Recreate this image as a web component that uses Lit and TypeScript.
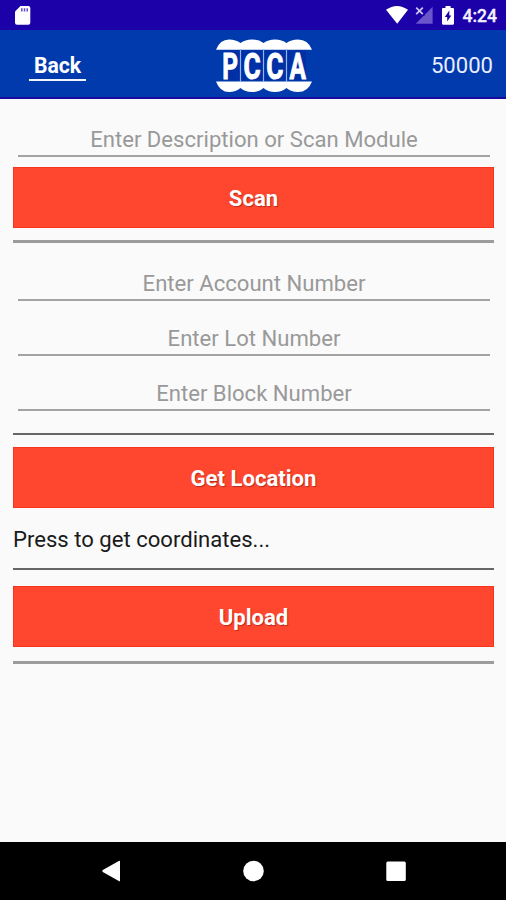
import { LitElement, html, css, svg } from "lit";
import { customElement, property } from "lit/decorators.js";

@customElement("status-bar")
class StatusBar extends LitElement {
  static styles = css`
    :host { display: block; height: 30px; background: #1c00a8; }
    svg { display: block; }
    text { font: 500 18.5px Roboto, sans-serif; fill: #f4f2ff; stroke: #f4f2ff; stroke-width: 0.35px; }
  `;
  render() {
    return html`<svg width="506" height="30" viewBox="0 0 506 30">
      <path fill="#fff" d="M20.5 6H28.3Q30.3 6 30.3 8V22.8Q30.3 24.8 28.3 24.8H17Q15 24.8 15 22.8V11.5Z" />
      <path stroke="#1c00a8" stroke-opacity=".7" stroke-width="1.5" d="M21.8 8.3V11.5M24.5 8.3V11.5M27.2 8.3V11.5" />
      <path fill="#fff" d="M386 9.8Q397 2.2 408 9.8L397.2 23.7Z" />
      <path fill="#6a55cb" d="M432.6 6.8V23.8H415.6Z" />
      <path fill="#1c00a8" d="M414 5H424.5V16H414Z" />
      <path stroke="#cfc8f2" stroke-width="1.7" d="M416.2 7.7L422.8 14.2M422.8 7.7L416.2 14.2" />
      <path fill="#fff" d="M445.5 6H450.6V8H453Q454 8 454 9V23.6Q454 24.7 453 24.7H443Q442 24.7 442 23.6V9Q442 8 443 8H445.5Z" />
      <path fill="#1c00a8" d="M449.3 10.5L444.8 17H447.2V21.5L451.3 15.4H449.3Z" />
      <text x="462.5" y="22.3" textLength="34.5" lengthAdjust="spacingAndGlyphs">4:24</text>
    </svg>`;
  }
}

@customElement("pcca-logo")
class PccaLogo extends LitElement {
  static styles = css`
    :host { display: block; }
    svg { display: block; }
    text { font: 700 37px Roboto, sans-serif; fill: #fff; stroke: #fff; stroke-width: 1px; }
  `;
  render() {
    const letters = [
      { c: "P", x: 7.2, s: 0.66 },
      { c: "C", x: 28.4, s: 0.71 },
      { c: "C", x: 51.2, s: 0.71 },
      { c: "A", x: 74.4, s: 0.66 },
    ];
    return html`<svg width="98" height="54" viewBox="0 0 98 54">
      <path fill="#001f9c" d="M7 12.5H91V42.5H7Z" opacity=".35" />
      <path fill="#fff" d="M1 11.7Q5 1.5 14 1.5Q21 1.5 25.5 5Q30 1.5 37 1.5Q44 1.5 48.5 5Q53 1.5 60 1.5Q67 1.5 71.5 5Q76 1.5 83 1.5Q93 1.5 97 11.7Z" />
      <path fill="#fff" d="M1 43.4H97Q93 54 83 54Q76 54 71.5 50Q67 54 60 54Q53 54 48.5 50Q44 54 37 54Q30 54 25.5 50Q21 54 14 54Q5 54 1 43.4Z" />
      <path stroke="#8fb4f0" stroke-width="1.2" d="M25.5 11V44M48.5 11V44M71.5 11V44" />
      ${letters.map(
        (l) => svg`<text transform="translate(${l.x} 40.7) scale(${l.s} 1)">${l.c}</text>`
      )}
    </svg>`;
  }
}

@customElement("entry-field")
class EntryField extends LitElement {
  @property() label = "";
  static styles = css`
    :host {
      display: block;
      box-sizing: border-box;
      margin: 0 4px 0 5px;
      height: 42px;
      border-bottom: 2px solid #a3a3a3;
      text-align: center;
      color: #999;
      font: 400 22.1px/26px Roboto, sans-serif;
      padding-top: 11px;
    }
  `;
  render() {
    return html`${this.label}`;
  }
}

@customElement("action-button")
class ActionButton extends LitElement {
  @property() label = "";
  static styles = css`
    :host {
      display: flex;
      box-sizing: border-box;
      height: 61px;
      align-items: center;
      justify-content: center;
      background: #ff4730;
      border: 1px solid #f8331e;
      color: #fff;
      font: 700 22.1px/26px Roboto, sans-serif;
      text-shadow: 1px 1px 1px #b92a18;
    }
  `;
  render() {
    return html`<span>${this.label}</span>`;
  }
}

@customElement("app-root")
class AppRoot extends LitElement {
  static styles = css`
    :host {
      display: flex;
      flex-direction: column;
      height: 900px;
      background: #fafafa;
      font-family: Roboto, sans-serif;
      overflow: hidden;
    }
    header {
      box-sizing: border-box;
      height: 69px;
      background: #003aad;
      border-bottom: 2px solid #1a0a9c;
      display: grid;
      grid-template-columns: 1fr 98px 1fr;
      color: #fff;
      font-size: 22.1px;
      line-height: 26px;
    }
    .back {
      justify-self: start;
      align-self: start;
      box-sizing: border-box;
      width: 57px;
      height: 28px;
      margin: 23px 0 0 29px;
      border-bottom: 2px solid #f2f5ff;
      text-align: center;
      font-size: 21.2px;
      font-weight: 700;
    }
    pcca-logo { margin: 8px 0 0 0; }
    .logo { padding-left: 11px; }
    .count { justify-self: end; margin: 22px 13px 0 0; color: #e9eeff; }
    main { flex: 1; padding: 16px 12px 0 13px; }
    .rule { height: 2px; background: #666; }
    .thick { height: 3px; background: #9c9c9c; }
    .gap-button { margin-top: 10px; }
    .gap-rule { margin-top: 12px; }
    .group { display: grid; gap: 13px; margin-top: 16px; }
    .rule-fields { margin-top: 22px; }
    .gap-location { margin-top: 12px; }
    .coords { font-size: 22.1px; line-height: 26px; color: #1a1a1a; margin-top: 18px; }
    .rule-coords { margin-top: 16px; }
    .gap-upload { margin-top: 16px; }
    .rule-end { margin-top: 14px; }
    nav { height: 58px; background: #000; }
    nav svg { display: block; }
  `;
  render() {
    return html`
      <status-bar></status-bar>
      <header>
        <span class="back">Back</span>
        <div class="logo"><pcca-logo></pcca-logo></div>
        <span class="count">50000</span>
      </header>
      <main>
        <entry-field label="Enter Description or Scan Module"></entry-field>
        <action-button class="gap-button" label="Scan"></action-button>
        <div class="rule thick gap-rule"></div>
        <div class="group">
          <entry-field label="Enter Account Number"></entry-field>
          <entry-field label="Enter Lot Number"></entry-field>
          <entry-field label="Enter Block Number"></entry-field>
        </div>
        <div class="rule rule-fields"></div>
        <action-button class="gap-location" label="Get Location"></action-button>
        <div class="coords">Press to get coordinates...</div>
        <div class="rule rule-coords"></div>
        <action-button class="gap-upload" label="Upload"></action-button>
        <div class="rule thick rule-end"></div>
      </main>
      <nav>
        <svg width="506" height="58" viewBox="0 0 506 58" fill="#fff">
          <path d="M120 19.5V38.5Q120 39.8 118.8 39.1L102.8 30Q101.6 29 102.8 28L118.8 18.9Q120 18.2 120 19.5Z" />
          <circle cx="253.5" cy="29" r="10.3" />
          <rect x="386.3" y="19.5" width="19.5" height="19.5" rx="1.5" />
        </svg>
      </nav>
    `;
  }
}
